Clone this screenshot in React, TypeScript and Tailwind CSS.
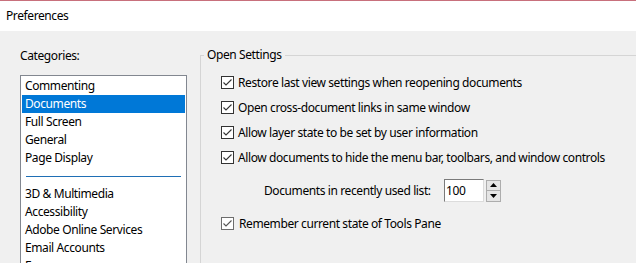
import React from "react";

const font = { fontFamily: '"Segoe UI", "Noto Sans", sans-serif' };

function CheckBox({ light }: { light?: boolean }) {
    return (
        <span
            className={`flex h-[13px] w-[13px] shrink-0 items-center justify-center border bg-white ${
                light ? "border-[#6d6d6d]" : "border-[#333333]"
            }`}
        >
            <svg width="11" height="11" viewBox="0 0 11 11">
                <path
                    d="M1.5 5.5 L4 8 L9.5 2.5"
                    fill="none"
                    stroke={light ? "#555555" : "#333333"}
                    strokeWidth="1.1"
                />
            </svg>
        </span>
    );
}

function Option({ label, light, gap = "gap-[4px]" }: { label: string; light?: boolean; gap?: string }) {
    return (
        <div className={`flex h-[25px] items-center ${gap}`}>
            <CheckBox light={light} />
            <span className="whitespace-nowrap">{label}</span>
        </div>
    );
}

const topCategories = ["Commenting", "Documents", "Full Screen", "General", "Page Display"];
const moreCategories = ["3D & Multimedia", "Accessibility", "Adobe Online Services", "Email Accounts", "Forms"];

export default function App() {
    return (
        <div
            className="h-[263px] w-[636px] overflow-hidden bg-[#f0f0f0] text-[12px] tracking-[-0.4px] text-black"
            style={font}
        >
            {/* title bar */}
            <div className="flex h-[31px] items-center border-t border-[#c8707c] bg-white pl-[6px]">
                Preferences
            </div>

            <div className="flex">
                {/* categories */}
                <div className="w-[200px] shrink-0 pl-[20px]">
                    <div className="mt-[17px] h-[16px] leading-[16px]">Categories:</div>
                    <div className="mt-[11px] h-[300px] w-[167px] border border-[#828790] bg-white p-px">
                        {topCategories.map((c) => (
                            <div
                                key={c}
                                className={`h-[18px] pl-[3px] leading-[18px] ${
                                    c === "Documents" ? "bg-[#0078d7] text-white" : ""
                                }`}
                            >
                                {c}
                            </div>
                        ))}
                        <div className="flex h-[18px] items-center px-[4px]">
                            <div className="h-px w-full bg-[#1f6fb5]" />
                        </div>
                        {moreCategories.map((c) => (
                            <div key={c} className="h-[18px] pl-[3px] leading-[18px]">
                                {c}
                            </div>
                        ))}
                    </div>
                </div>

                {/* open settings group */}
                <fieldset className="mt-[16px] h-[300px] flex-1 border-l border-t border-[#d5d5d5] pl-[20px]">
                    <legend className="-ml-[17px] px-[3px] leading-[16px]">Open Settings</legend>
                    <div className="mt-[7px]">
                        <Option label="Restore last view settings when reopening documents" />
                        <Option label="Open cross-document links in same window" />
                        <Option label="Allow layer state to be set by user information" />
                        <Option label="Allow documents to hide the menu bar, toolbars, and window controls" />
                    </div>
                    <div className="mt-[9px] flex h-[23px] items-center pl-[43px]">
                        <span className="w-[180px] whitespace-nowrap">Documents in recently used list:</span>
                        <div className="flex h-[23px] w-[40px] items-center border border-[#7a7a7a] border-b-[#dcdcdc] border-r-[#dcdcdc] bg-white pl-[1px]">
                            100
                        </div>
                        <div className="ml-[2px] flex h-[22px] w-[15px] flex-col">
                            <div className="flex h-[11px] items-center justify-center border border-[#adadad] bg-[#e5e5e5]">
                                <svg width="7" height="4" viewBox="0 0 7 4">
                                    <path d="M0 4 L3.5 0 L7 4 Z" fill="#000" />
                                </svg>
                            </div>
                            <div className="flex h-[11px] items-center justify-center border border-t-0 border-[#adadad] bg-[#e5e5e5]">
                                <svg width="7" height="4" viewBox="0 0 7 4">
                                    <path d="M0 0 L7 0 L3.5 4 Z" fill="#000" />
                                </svg>
                            </div>
                        </div>
                    </div>
                    <div className="mt-[9px]">
                        <Option label="Remember current state of Tools Pane" light gap="gap-[5px]" />
                    </div>
                </fieldset>
            </div>
        </div>
    );
}
